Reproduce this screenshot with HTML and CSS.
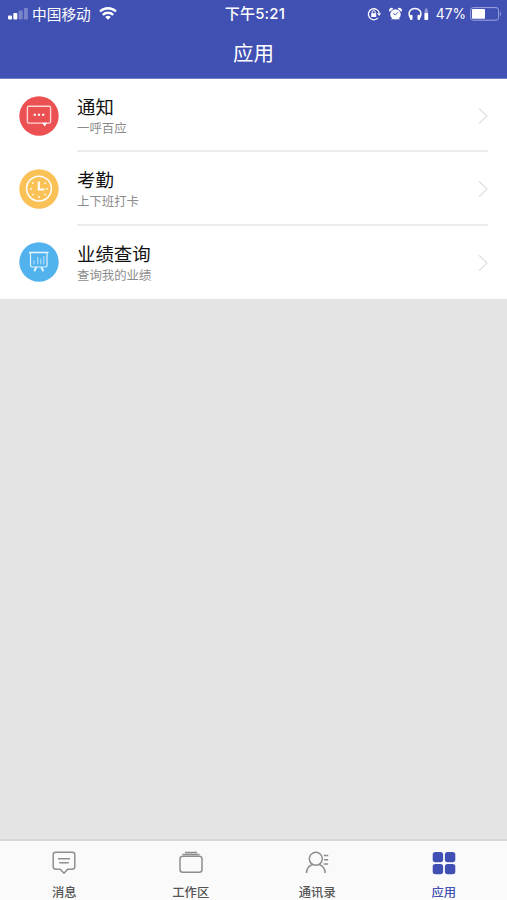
FILE: index.html
```
<!DOCTYPE html>
<html lang="zh-CN">
<head>
    <title>应用</title>
    <meta charset="UTF-8">
    <meta name="viewport" content="width=device-width, initial-scale=1"/>
    <link rel="stylesheet" href="styles.css">
</head>
<body>
<div class="app">
    <header class="header">
        <div class="status">
            <div class="status-left">
                <svg width="20" height="12" viewBox="0 0 20 12" fill="#fff">
                    <rect x="0" y="7.5" width="4" height="4" rx="1"/>
                    <rect x="5.3" y="5" width="4" height="6.5" rx="1"/>
                    <rect x="10.6" y="2.5" width="4" height="9" rx="1" opacity=".3"/>
                    <rect x="15.9" y="0" width="4" height="11.5" rx="1" opacity=".3"/>
                </svg>
                <span class="carrier">中国移动</span>
                <svg width="18" height="13" viewBox="0 0 18 13" fill="none" stroke="#fff" stroke-width="2.4">
                    <path d="M1 4.5a11.5 11.5 0 0 1 16 0M3.8 7.8a7.5 7.5 0 0 1 10.4 0"/>
                    <path d="M9 12.8L6.2 10a4 4 0 0 1 5.6 0z" fill="#fff" stroke="none"/>
                </svg>
            </div>
            <div class="time">下午5:21</div>
            <div class="status-right">
                <svg width="14" height="14" viewBox="0 0 14 14" fill="none" stroke="#fff" stroke-width="1.3">
                    <path d="M11 10.9A5.5 5.5 0 1 1 12.3 6.5"/>
                    <path d="M10 6.2h4l-1.8 2.7z" fill="#fff" stroke="none"/>
                    <rect x="4.2" y="6.2" width="5" height="3.8" fill="#fff" stroke="none"/>
                    <path d="M5.2 6.5V5.2a1.5 1.5 0 0 1 3 0v1.3" stroke-width="1"/>
                </svg>
                <svg class="alarm" width="13" height="14" viewBox="0 0 13 14" fill="#fff">
                    <circle cx="6.5" cy="7.4" r="5.2"/>
                    <path d="M.7 4.8A2.3 2.3 0 0 1 4.3 1.7zM12.3 4.8a2.3 2.3 0 0 0-3.6-3.1zM2.3 13l1-2.4 1.5 1zM10.7 13l-1-2.4-1.5 1z"/>
                    <path d="M4.2 6.5l2.3 1.3L8.7 5.4" fill="none" stroke="#4150b3"/>
                </svg>
                <svg width="22" height="14" viewBox="0 0 22 14" fill="#fff">
                    <path d="M2.3 11C-.8 5 2.8 1.4 7 1.4S14.8 5 11.7 11" fill="none" stroke="#fff" stroke-width="1.5"/>
                    <rect x="2" y="7.8" width="2.5" height="5.2" rx="1"/>
                    <rect x="9.5" y="7.8" width="2.5" height="5.2" rx="1"/>
                    <rect x="16.5" y="3" width="3.6" height="10" rx=".8" opacity=".4"/>
                    <rect x="16.5" y="6" width="3.6" height="7" rx=".8"/>
                    <rect x="17.3" y="1.5" width="2" height="1.5" opacity=".5"/>
                </svg>
                <span class="percent">47%</span>
                <svg width="32" height="14" viewBox="0 0 32 14">
                    <rect x=".6" y=".6" width="28" height="12.6" rx="2.6" fill="none" stroke="#9da5dc"/>
                    <rect x="2" y="2" width="13" height="9.8" rx="1" fill="#fff"/>
                    <path d="M30 4.6q2 2.3 0 4.6z" fill="#9da5dc"/>
                </svg>
            </div>
        </div>
        <h1 class="title">应用</h1>
    </header>

    <main class="list">
        <div class="item">
            <svg class="item-icon" width="40" height="40" viewBox="0 0 40 40" fill="none" stroke="#fff">
                <circle cx="20" cy="20" r="19.7" fill="#eb5052" stroke="none"/>
                <rect x="8.4" y="10.3" width="23.2" height="16.8" rx="1.5" stroke="#ffd6d4" stroke-width="1.4"/>
                <path d="M23 26.8h5.2l-2.4 3.8z" fill="#fff" stroke="none"/>
                <path d="M14.7 18.8h2.2M18.9 18.8h2.2M23.1 18.8h2.2" stroke-width="2"/>
            </svg>
            <div class="item-body">
                <div class="item-text">
                    <div class="item-title">通知</div>
                    <div class="item-desc">一呼百应</div>
                </div>
                <svg class="arrow" width="10" height="18" viewBox="0 0 10 18"><path d="M1 1.2L9 9l-8 7.8"/></svg>
            </div>
        </div>
        <div class="item">
            <svg class="item-icon" width="40" height="40" viewBox="0 0 40 40" fill="none" stroke="#fff">
                <circle cx="20" cy="20" r="19.7" fill="#f9c156" stroke="none"/>
                <circle cx="20" cy="19.6" r="12.4" stroke-width="1.5"/>
                <path d="M19.8 12.4v8.2h5.6" stroke-width="2"/>
                <path d="M20 27v2M11 19.8h2M27 19.8h2M13.2 13.5l1.3 1.2M25.5 14.7l1.3-1.2M13.2 26.2l1.3-1.2M25.5 25l1.3 1.2" stroke-width="1.3"/>
            </svg>
            <div class="item-body">
                <div class="item-text">
                    <div class="item-title">考勤</div>
                    <div class="item-desc">上下班打卡</div>
                </div>
                <svg class="arrow" width="10" height="18" viewBox="0 0 10 18"><path d="M1 1.2L9 9l-8 7.8"/></svg>
            </div>
        </div>
        <div class="item">
            <svg class="item-icon" width="40" height="40" viewBox="0 0 40 40" fill="none" stroke="#e2f5ff">
                <circle cx="20" cy="20" r="19.7" fill="#51b2ed" stroke="none"/>
                <path d="M10 10.5h19.5" stroke-width="1.6"/>
                <path d="M11.5 11v12.2q0 1.8 1.8 1.8h13q1.7 0 1.7-1.8V11" stroke-width="1.2"/>
                <path d="M15 18.5v3.7M18.8 15v7.2M21.8 16.5v5.7M24.8 14v8.2" stroke="#b5e3fd" stroke-width="1.1"/>
                <path d="M17.4 25.3l-2.2 4M22.2 25.3l2.2 4" stroke-width="2"/>
            </svg>
            <div class="item-body">
                <div class="item-text">
                    <div class="item-title">业绩查询</div>
                    <div class="item-desc">查询我的业绩</div>
                </div>
                <svg class="arrow" width="10" height="18" viewBox="0 0 10 18"><path d="M1 1.2L9 9l-8 7.8"/></svg>
            </div>
        </div>
    </main>

    <nav class="tabs">
        <div class="tab">
            <svg width="24" height="24" viewBox="0 0 24 24">
                <path d="M3.7 1.3h16.6q2.5 0 2.5 2.5v12q0 2.4-2.5 2.4h-4.6L12 22.2l-3.8-4H3.7q-2.5 0-2.5-2.4v-12q0-2.5 2.5-2.5z"/>
                <path d="M6 7.8h12M7.2 11.8h9.6"/>
            </svg>
            <span>消息</span>
        </div>
        <div class="tab">
            <svg width="24" height="24" viewBox="0 0 24 24">
                <rect x="1" y="5.2" width="22" height="16" rx="2.8"/>
                <path d="M3.5 3.6h17M6 1.5h12"/>
            </svg>
            <span>工作区</span>
        </div>
        <div class="tab">
            <svg width="24" height="24" viewBox="0 0 24 24">
                <circle cx="10.8" cy="7.8" r="6.5"/>
                <path d="M7.4 13.5Q1.6 15.8 1.5 22M14.2 13.5q5.9 2.3 6 8.5M18.8 4.5h4.4M19 8.8h4.2M18.6 13h4.6"/>
            </svg>
            <span>通讯录</span>
        </div>
        <div class="tab active">
            <svg width="24" height="24" viewBox="0 0 24 24">
                <rect x=".7" y=".9" width="10.4" height="10.4" rx="2.7"/>
                <rect x="12.9" y=".9" width="10.4" height="10.4" rx="2.7"/>
                <rect x=".7" y="12.9" width="10.4" height="10.4" rx="2.7"/>
                <rect x="12.9" y="12.9" width="10.4" height="10.4" rx="2.7"/>
            </svg>
            <span>应用</span>
        </div>
    </nav>
</div>
</body>
</html>
```
FILE: styles.css
```
* {
    box-sizing: border-box;
}

body {
    margin: 0;
    font-family: "Noto Sans CJK SC", sans-serif;
}

svg {
    display: block;
    flex: none;
}

.app {
    display: flex;
    flex-direction: column;
    height: 100vh;
    overflow: hidden;
    background: #e4e4e4;
}

.header {
    flex: none;
    height: 79px;
    color: #fff;
    background: #4150b3;
    border-bottom: 1px solid #7780c4;
}

.status {
    display: grid;
    grid-template-columns: 1fr auto 1fr;
    align-items: center;
    height: 27px;
    padding: 0 5px 0 8px;
    font-size: 14.7px;
    line-height: 27px;
}

.status-left, .status-right {
    display: flex;
    align-items: center;
}

.status-right {
    justify-content: flex-end;
}

.carrier {
    margin: 0 8px 0 4px;
}

.time {
    font-family: Inter, "Noto Sans CJK SC", sans-serif;
    font-size: 15px;
    font-weight: 500;
    letter-spacing: .2px;
}

.alarm {
    margin: 0 6px 0 8px;
}

.percent {
    margin: 0 4px 0 6px;
    padding-top: 2px;
    font-family: Inter, sans-serif;
    font-size: 13.8px;
    line-height: 25px;
}

.title {
    margin: 0;
    font-size: 20.5px;
    font-weight: 400;
    line-height: 51px;
    text-align: center;
}

.list {
    flex: none;
    background: #fff;
}

.item {
    display: flex;
    align-items: center;
    height: 73.33px;
    padding: 0 19px;
}

.item-icon {
    margin-right: 18px;
}

.item-body {
    display: flex;
    flex: 1;
    align-items: center;
    justify-content: space-between;
    height: 100%;
    padding-top: 2px;
    border-bottom: 2px solid #ececec;
}

.item:last-child .item-body {
    padding-top: 1px;
    border-bottom: 0;
}

.item-title {
    color: #111;
    font-size: 18.4px;
    line-height: 24px;
}

.item-desc {
    padding-top: 1px;
    color: #8c8c8c;
    font-size: 12.4px;
    line-height: 19px;
}

.arrow {
    fill: none;
    stroke: #e0e0e0;
    stroke-width: 1.2;
}

.tabs {
    display: flex;
    flex: none;
    height: 61px;
    margin-top: auto;
    padding-left: 1px;
    background: #fafafa;
    border-top: 2px solid #d7d7d7;
}

.tab {
    display: flex;
    flex: 1;
    flex-direction: column;
    align-items: center;
    padding-top: 10px;
    color: #555;
    font-size: 12.3px;
    font-weight: 500;
    line-height: 18px;
}

.tab svg {
    margin-bottom: 8px;
    fill: none;
    stroke: #8e8e8e;
    stroke-width: 1.5;
}

.tab.active {
    color: #4150b3;
}

.tab.active svg {
    fill: #3f4fb4;
    stroke: none;
}
```
